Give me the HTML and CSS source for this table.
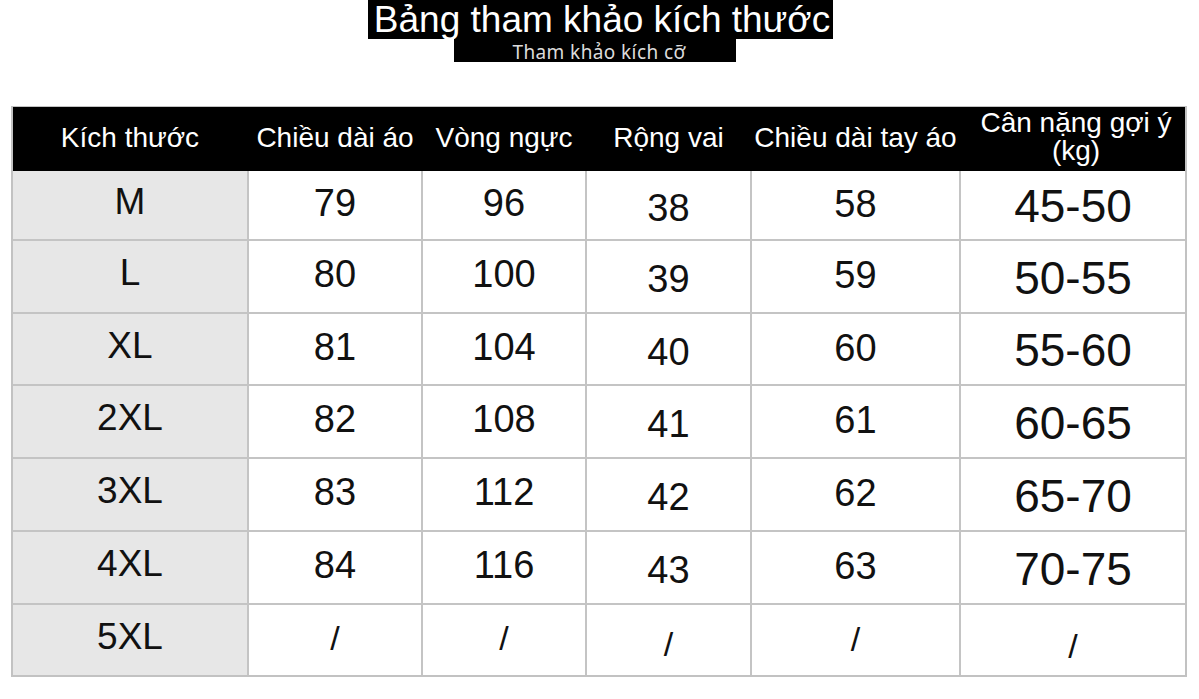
FILE: index.html
```html
<!DOCTYPE html>
<html lang="vi">
<head>
<meta charset="utf-8">
<title>Bảng tham khảo kích thước</title>
<link rel="stylesheet" href="styles.css">
</head>
<body>
<div class="page">
  <header class="heading">
    <h1 class="title">Bảng tham khảo kích thước</h1>
    <div class="subtitle">Tham khảo kích cỡ</div>
  </header>

  <section class="chart">
    <div class="head">
      <div class="hc">Kích thước</div>
      <div class="hc">Chiều dài áo</div>
      <div class="hc">Vòng ngực</div>
      <div class="hc">Rộng vai</div>
      <div class="hc">Chiều dài tay áo</div>
      <div class="hc two"><span>Cân nặng gợi ý</span><span>(kg)</span></div>
    </div>
    <div class="body">
      <div class="c size">M</div><div class="c c2">79</div><div class="c c3">96</div><div class="c c4">38</div><div class="c c5">58</div><div class="c c6">45-50</div>
      <div class="c size">L</div><div class="c c2">80</div><div class="c c3">100</div><div class="c c4">39</div><div class="c c5">59</div><div class="c c6">50-55</div>
      <div class="c size">XL</div><div class="c c2">81</div><div class="c c3">104</div><div class="c c4">40</div><div class="c c5">60</div><div class="c c6">55-60</div>
      <div class="c size">2XL</div><div class="c c2">82</div><div class="c c3">108</div><div class="c c4">41</div><div class="c c5">61</div><div class="c c6">60-65</div>
      <div class="c size">3XL</div><div class="c c2">83</div><div class="c c3">112</div><div class="c c4">42</div><div class="c c5">62</div><div class="c c6">65-70</div>
      <div class="c size">4XL</div><div class="c c2">84</div><div class="c c3">116</div><div class="c c4">43</div><div class="c c5">63</div><div class="c c6">70-75</div>
      <div class="c size">5XL</div><div class="c c2 sl">/</div><div class="c c3 sl">/</div><div class="c c4 sl">/</div><div class="c c5 sl">/</div><div class="c c6 sl">/</div>
    </div>
  </section>
</div>
</body>
</html>
```

FILE: styles.css
```css
* { box-sizing: border-box; }
html, body { margin: 0; padding: 0; background: #ffffff; }
body { font-family: "Liberation Sans", Arial, sans-serif; color: #111; }

.page {
  width: 1199px;
  height: 699px;
  overflow: hidden;
}

.heading {
  display: flex;
  flex-direction: column;
  align-items: center;
}

.title {
  margin: 0 0 0 2px;
  background: #000;
  color: #fff;
  font-weight: normal;
  font-size: 37px;
  line-height: 37px;
  height: 39px;
  padding: 1px 3px 1px 6px;
}

.subtitle {
  margin-left: -9px;
  width: 282px;
  height: 23px;
  background: #000;
  color: #dcdcdc;
  font-family: "Noto Sans", "Open Sans", sans-serif;
  font-size: 19px;
  letter-spacing: 0.4px;
  line-height: 19px;
  text-align: center;
  padding: 4px 0 0 8px;
}

.chart {
  margin: 44px 0 0 11px;
  width: 1176px;
  border: 2px solid #c2c2c2;
  border-top: 1px solid #c2c2c2;
}

.head, .body {
  display: grid;
  grid-template-columns: 234px 172px 162px 163px 207px 224px;
  column-gap: 2px;
}

.head {
  background: #000;
  height: 64px;
  color: #fff;
}

.hc {
  display: flex;
  align-items: center;
  justify-content: center;
  font-size: 28px;
  white-space: nowrap;
  padding-bottom: 2px;
}

.hc.two {
  flex-direction: column;
  line-height: 28px;
  padding-bottom: 4px;
  padding-left: 6px;
}

.body {
  background: #c4c4c4;
  row-gap: 2px;
  grid-template-rows: 68px 71px 70px 71px 71px 71px 70px;
}

.c {
  background: #fff;
  display: flex;
  align-items: center;
  justify-content: center;
  font-size: 38px;
}

.size {
  background: #e7e7e7;
  font-size: 37px;
  padding-bottom: 7px;
}

.c2 { padding-bottom: 4px; }
.c3 { padding-bottom: 4px; }
.c4 { padding-top: 6px; }
.c5 { padding-bottom: 2px; }
.c6 { font-size: 46px; padding-top: 2px; }

.sl { font-size: 34px; }
.c6.sl { font-size: 34px; padding-top: 12px; }
.c4.sl { padding-top: 8px; }
```
